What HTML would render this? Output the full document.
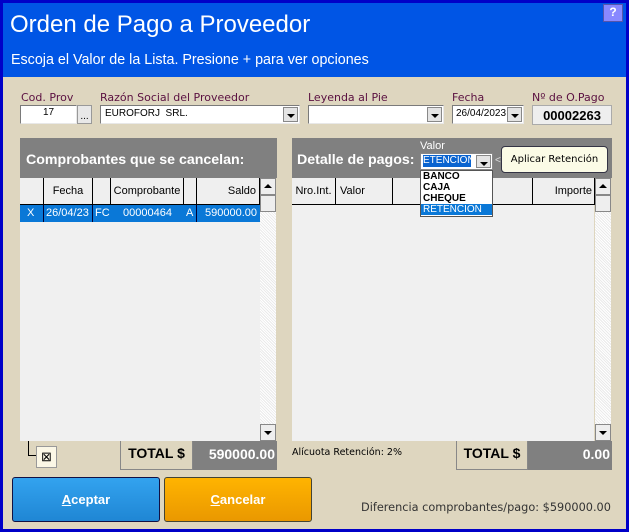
<!DOCTYPE html>
<html><head><meta charset="utf-8"><style>
*{box-sizing:border-box;margin:0;padding:0}
body{width:631px;height:532px;position:relative;overflow:hidden;background:#fff;font-family:"Liberation Sans",sans-serif}
.a{position:absolute}
.lbl{color:#5a1040;font-size:11px;font-family:"DejaVu Sans",sans-serif}
.inp{background:#fff;border:1px solid #7a7a7a;border-right-color:#e8e8e8;border-bottom-color:#e8e8e8;font-size:10px;color:#000}
.dd{position:absolute;width:15px;background:#e4e4e4;border:1px solid #888;top:1px;bottom:1px;right:1px}
.dd:after{content:"";position:absolute;left:3px;top:6px;border-left:4px solid transparent;border-right:4px solid transparent;border-top:4px solid #000}
.gh{position:absolute;background:#efefef;border-right:1px solid #000;border-bottom:1px solid #000;font-size:11px;text-align:center;line-height:26px;height:27px}
.sb{background:#f4f4f4;background-image:repeating-linear-gradient(45deg,#fff 0 1px,#eaeaea 1px 2px)}
.btnsq{position:absolute;background:#eee;border:1px solid #888}
</style></head><body>
<div class="a" style="left:0;top:0;width:629px;height:532px;background:#0000c8"></div>
<div class="a" style="left:3px;top:3px;width:623px;height:74px;background:#0055e5"></div>
<div class="a" style="left:3px;top:77px;width:623px;height:452px;background:#ded6bf"></div>
<div class="a" style="left:603px;top:4px;width:20px;height:18px;background:#8888ff;border:1px solid #5555aa;color:#fff;font-weight:bold;font-size:12px;text-align:center;line-height:15px">?</div>
<div class="a" style="left:10px;top:11px;color:#fff;font-size:24px">Orden de Pago a Proveedor</div>
<div class="a" style="left:11px;top:52px;color:#fff;font-size:14.3px">Escoja el Valor de la Lista. Presione + para ver opciones</div>

<div class="a lbl" style="left:21px;top:91px">Cod. Prov</div>
<div class="a inp" style="left:20px;top:105px;width:57px;height:19px;text-align:center;line-height:14px">17</div>
<div class="a" style="left:77px;top:105px;width:15px;height:19px;background:#e8e8e8;border:1px solid #999;font-size:10px;text-align:center;line-height:22px">...</div>
<div class="a lbl" style="left:100px;top:91px">Razón Social del Proveedor</div>
<div class="a inp" style="left:100px;top:105px;width:200px;height:19px;padding-left:4px;line-height:16px">EUROFORJ&nbsp; SRL.<div class="dd"></div></div>
<div class="a lbl" style="left:308px;top:91px">Leyenda al Pie</div>
<div class="a inp" style="left:308px;top:105px;width:136px;height:19px"><div class="dd"></div></div>
<div class="a lbl" style="left:452px;top:91px">Fecha</div>
<div class="a inp" style="left:452px;top:105px;width:72px;height:19px;padding-left:3px;line-height:16px">26/04/2023<div class="dd"></div></div>
<div class="a lbl" style="left:532px;top:91px">Nº de O.Pago</div>
<div class="a" style="left:532px;top:105px;width:80px;height:20px;background:#eee;border:1px solid #aaa;font-weight:bold;font-size:13px;text-align:center;line-height:19px">00002263</div>

<!-- left panel -->
<div class="a" style="left:20px;top:138px;width:257px;height:40px;background:#808080"></div>
<div class="a" style="left:26px;top:152px;color:#fff;font-weight:bold;font-size:14.2px">Comprobantes que se cancelan:</div>
<div class="a" style="left:20px;top:178px;width:240px;height:263px;background:#f0f0f0"></div>
<div class="gh" style="left:20px;top:178px;width:24px"></div>
<div class="gh" style="left:44px;top:178px;width:49px">Fecha</div>
<div class="gh" style="left:93px;top:178px;width:18px"></div>
<div class="gh" style="left:111px;top:178px;width:73px">Comprobante</div>
<div class="gh" style="left:184px;top:178px;width:13px"></div>
<div class="gh" style="left:197px;top:178px;width:63px;text-align:right;padding-right:3px">Saldo</div>
<div class="a" style="left:20px;top:205px;width:240px;height:17px;background:#0a78d7;color:#fff;font-size:11px;line-height:17px">
<span class="a" style="left:7px">X</span><span class="a" style="left:26px">26/04/23</span><span class="a" style="left:75px">FC</span><span class="a" style="left:103px">00000464</span><span class="a" style="left:166px">A</span><span class="a" style="left:185px">590000.00</span>
<div class="a" style="left:23px;top:0;width:1px;height:17px;background:#003"></div><div class="a" style="left:72px;top:0;width:1px;height:17px;background:#003"></div><div class="a" style="left:176px;top:0;width:1px;height:17px;background:#003"></div></div>
<div class="a sb" style="left:260px;top:178px;width:16px;height:263px"></div>
<div class="btnsq" style="left:260px;top:178px;width:16px;height:17px"><div class="a" style="left:3px;top:5px;border-left:4px solid transparent;border-right:4px solid transparent;border-bottom:4px solid #000"></div></div>
<div class="btnsq" style="left:260px;top:195px;width:16px;height:17px"></div>
<div class="btnsq" style="left:260px;top:424px;width:16px;height:17px"><div class="a" style="left:3px;top:6px;border-left:4px solid transparent;border-right:4px solid transparent;border-top:4px solid #000"></div></div>
<div class="a" style="left:28px;top:441px;width:1px;height:14px;background:#000"></div>
<div class="a" style="left:28px;top:455px;width:9px;height:1px;background:#000"></div>
<div class="a" style="left:36px;top:446px;width:21px;height:22px;background:#fbf7e6;border:1px solid #999;font-size:13px;text-align:center;line-height:20px">⊠</div>
<div class="a" style="left:120px;top:441px;width:73px;height:29px;border:1px solid #888;border-top:none;font-weight:bold;font-size:14px;text-align:center;line-height:24px">TOTAL $</div>
<div class="a" style="left:193px;top:441px;width:84px;height:29px;background:#808080;color:#fff;font-weight:bold;font-size:14px;text-align:right;padding-right:2px;line-height:26px">590000.00</div>

<!-- right panel -->
<div class="a" style="left:292px;top:138px;width:320px;height:40px;background:#808080"></div>
<div class="a" style="left:297px;top:152px;color:#fff;font-weight:bold;font-size:14.2px">Detalle de pagos:</div>
<div class="a" style="left:420px;top:140px;color:#fff;font-size:11px">Valor</div>
<div class="a" style="left:420px;top:153px;width:73px;height:17px;background:#fff;border:1px solid #888"><div class="a" style="left:2px;top:1px;width:48px;height:12px;background:#0a64d0;color:#fff;font-size:10px;line-height:12px;overflow:hidden">ETENCION</div><div class="dd"></div></div>
<div class="a" style="left:495px;top:155px;color:#ddd;font-size:10px">&lt;</div>
<div class="a" style="left:501px;top:146px;width:107px;height:27px;background:#fbfbe6;border:1px solid #334;border-radius:4px;font-size:10px;text-align:center;line-height:25px;font-family:'DejaVu Sans',sans-serif">Aplicar Retención</div>
<div class="a" style="left:292px;top:178px;width:302px;height:263px;background:#f0f0f0"></div>
<div class="gh" style="left:292px;top:178px;width:44px">Nro.Int.</div>
<div class="gh" style="left:336px;top:178px;width:57px;text-align:left;padding-left:4px">Valor</div>
<div class="gh" style="left:393px;top:178px;width:140px"></div>
<div class="gh" style="left:533px;top:178px;width:62px;text-align:right;padding-right:2px">Importe</div>
<div class="a sb" style="left:595px;top:178px;width:16px;height:263px"></div>
<div class="btnsq" style="left:595px;top:178px;width:16px;height:17px"><div class="a" style="left:3px;top:5px;border-left:4px solid transparent;border-right:4px solid transparent;border-bottom:4px solid #000"></div></div>
<div class="btnsq" style="left:595px;top:195px;width:16px;height:17px"></div>
<div class="btnsq" style="left:595px;top:424px;width:16px;height:17px"><div class="a" style="left:3px;top:6px;border-left:4px solid transparent;border-right:4px solid transparent;border-top:4px solid #000"></div></div>
<div class="a" style="left:420px;top:170px;width:73px;height:47px;background:#fff;border:1px solid #555;font-size:10px;font-weight:bold;line-height:11px">
<div style="padding-left:2px">BANCO</div><div style="padding-left:2px">CAJA</div><div style="padding-left:2px">CHEQUE</div><div style="padding-left:2px;background:#0a78d7;color:#fff;font-weight:normal">RETENCION</div></div>
<div class="a" style="left:292px;top:447px;font-size:9.5px;font-family:'DejaVu Sans',sans-serif">Alícuota Retención: 2%</div>
<div class="a" style="left:456px;top:441px;width:72px;height:29px;border:1px solid #888;border-top:none;font-weight:bold;font-size:14px;text-align:center;line-height:24px">TOTAL $</div>
<div class="a" style="left:528px;top:441px;width:84px;height:29px;background:#808080;color:#fff;font-weight:bold;font-size:14px;text-align:right;padding-right:2px;line-height:26px">0.00</div>

<div class="a" style="left:12px;top:477px;width:148px;height:45px;background:linear-gradient(#33a3ef,#1f86d4);border:1px solid #114;border-radius:3px;color:#fff;font-weight:bold;font-size:13px;text-align:center;line-height:43px"><u>A</u>ceptar</div>
<div class="a" style="left:164px;top:477px;width:148px;height:45px;background:linear-gradient(#ffb400,#ea9800);border:1px solid #443;border-radius:3px;color:#fff;font-weight:bold;font-size:13px;text-align:center;line-height:43px"><u>C</u>ancelar</div>
<div class="a" style="left:361px;top:501px;font-size:11.3px;color:#333;font-family:'DejaVu Sans',sans-serif">Diferencia comprobantes/pago: $590000.00</div>
</body></html>
